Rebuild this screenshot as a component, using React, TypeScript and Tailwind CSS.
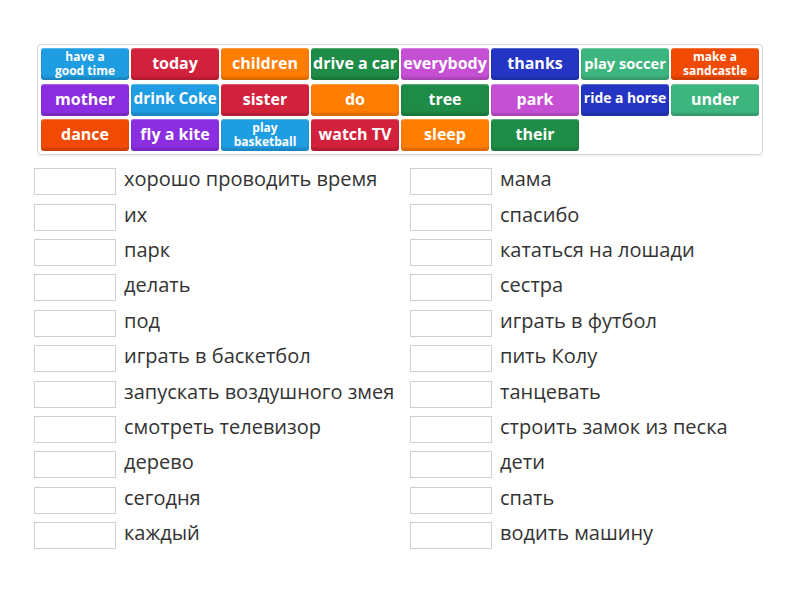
import React from "react";

type Tile = { label: string; color: string; size: string };

const C = {
  blue: "bg-[#1f9de3]",
  red: "bg-[#d2213d]",
  orange: "bg-[#ff7d00]",
  green: "bg-[#1e8b46]",
  magenta: "bg-[#c650d4]",
  navy: "bg-[#2335c2]",
  teal: "bg-[#3db57f]",
  flame: "bg-[#f14a02]",
  purple: "bg-[#8b2de0]",
};

const SMALL = "text-[12px] leading-[14px]";
const BIG = "text-[16px] pb-[2px]";

const tiles: Tile[] = [
  { label: "have a\ngood time", color: C.blue, size: SMALL },
  { label: "today", color: C.red, size: BIG },
  { label: "children", color: C.orange, size: BIG },
  { label: "drive a car", color: C.green, size: BIG },
  { label: "everybody", color: C.magenta, size: BIG },
  { label: "thanks", color: C.navy, size: BIG },
  { label: "play soccer", color: C.teal, size: "text-[14.7px] pb-[2px]" },
  { label: "make a\nsandcastle", color: C.flame, size: SMALL },
  { label: "mother", color: C.purple, size: BIG },
  { label: "drink Coke", color: C.blue, size: "text-[15.4px] pb-[2px]" },
  { label: "sister", color: C.red, size: BIG },
  { label: "do", color: C.orange, size: BIG },
  { label: "tree", color: C.green, size: BIG },
  { label: "park", color: C.magenta, size: BIG },
  { label: "ride a horse", color: C.navy, size: "text-[13.9px] pb-[2px]" },
  { label: "under", color: C.teal, size: BIG },
  { label: "dance", color: C.flame, size: BIG },
  { label: "fly a kite", color: C.purple, size: BIG },
  { label: "play\nbasketball", color: C.blue, size: SMALL },
  { label: "watch TV", color: C.red, size: BIG },
  { label: "sleep", color: C.orange, size: BIG },
  { label: "their", color: C.green, size: BIG },
];

const left = [
  "хорошо проводить время",
  "их",
  "парк",
  "делать",
  "под",
  "играть в баскетбол",
  "запускать воздушного змея",
  "смотреть телевизор",
  "дерево",
  "сегодня",
  "каждый",
];

const right = [
  "мама",
  "спасибо",
  "кататься на лошади",
  "сестра",
  "играть в футбол",
  "пить Колу",
  "танцевать",
  "строить замок из песка",
  "дети",
  "спать",
  "водить машину",
];

function WordTile({ t }: { t: Tile }) {
  return (
    <div
      className={`${t.color} ${t.size} h-[32px] rounded-[3px] flex items-center justify-center text-center text-white font-bold whitespace-pre shadow-[inset_0_1px_0_rgba(255,255,255,0.25),inset_0_-3px_2px_rgba(0,0,0,0.15)]`}
    >
      {t.label}
    </div>
  );
}

function Row({ text }: { text: string }) {
  return (
    <div className="h-[35.4px] flex items-center">
      <div className="w-[82px] h-[27px] border border-[#cfcfcf] bg-white shrink-0" />
      <span className="ml-[8px] text-[20px] text-[#333333] leading-none pb-[5px]">{text}</span>
    </div>
  );
}

export default function App() {
  return (
    <div
      className="w-[800px] h-[600px] bg-white relative"
      style={{ fontFamily: '"Open Sans", "Noto Sans", sans-serif' }}
    >
      <div className="pt-[44px] pl-[37px]">
        <div className="w-[726px] border border-[#d6d6d6] rounded-[4px] p-[3px] shadow-[0_1px_2px_rgba(0,0,0,0.08)]">
          <div className="grid grid-cols-[repeat(8,88px)] gap-x-[2px] gap-y-[3.5px]">
            {tiles.map((t) => (
              <WordTile key={t.label} t={t} />
            ))}
          </div>
        </div>
      </div>
      <div className="flex pl-[34px] pt-[9px]">
        <div className="w-[376px] flex flex-col">
          {left.map((s) => (
            <Row key={s} text={s} />
          ))}
        </div>
        <div className="w-[376px] flex flex-col">
          {right.map((s) => (
            <Row key={s} text={s} />
          ))}
        </div>
      </div>
    </div>
  );
}
